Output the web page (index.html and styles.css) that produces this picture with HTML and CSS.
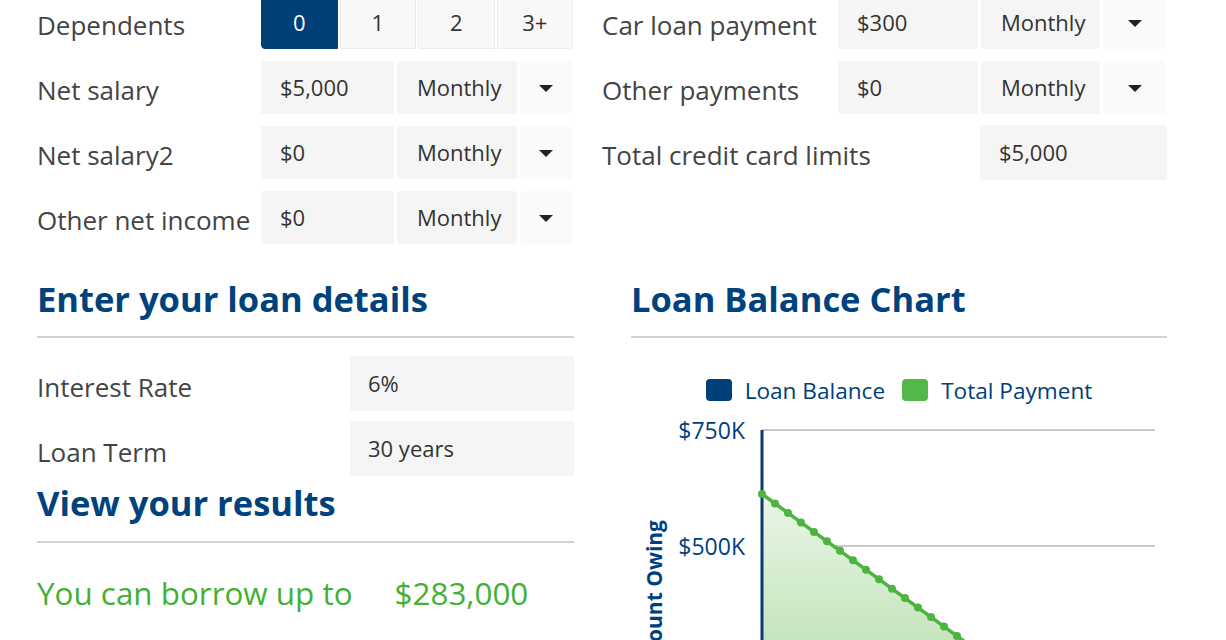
FILE: index.html
```html
<!DOCTYPE html>
<html>
  <head>
    <title>Borrowing power calculator</title>
    <link rel="stylesheet" href="styles.css">
  </head>
  <body>
    <div class="page">
      <div class="income">
        <div class="income-col left">
          <div class="form-row">
            <label class="form-label">Dependents</label>
            <div class="btn-group">
              <button class="btn active">0</button>
              <button class="btn">1</button>
              <button class="btn">2</button>
              <button class="btn">3+</button>
            </div>
          </div>
          <div class="form-row">
            <label class="form-label">Net salary</label>
            <div class="combo">
              <div class="field value">$5,000</div>
              <div class="field period">Monthly</div>
              <div class="field arrow"><span class="caret"></span></div>
            </div>
          </div>
          <div class="form-row">
            <label class="form-label">Net salary2</label>
            <div class="combo">
              <div class="field value">$0</div>
              <div class="field period">Monthly</div>
              <div class="field arrow"><span class="caret"></span></div>
            </div>
          </div>
          <div class="form-row">
            <label class="form-label">Other net income</label>
            <div class="combo">
              <div class="field value">$0</div>
              <div class="field period">Monthly</div>
              <div class="field arrow"><span class="caret"></span></div>
            </div>
          </div>
        </div>

        <div class="income-col right">
          <div class="form-row">
            <label class="form-label">Car loan payment</label>
            <div class="combo">
              <div class="field value">$300</div>
              <div class="field period">Monthly</div>
              <div class="field arrow"><span class="caret"></span></div>
            </div>
          </div>
          <div class="form-row">
            <label class="form-label">Other payments</label>
            <div class="combo">
              <div class="field value">$0</div>
              <div class="field period">Monthly</div>
              <div class="field arrow"><span class="caret"></span></div>
            </div>
          </div>
          <div class="form-row">
            <label class="form-label">Total credit card limits</label>
            <div class="combo end">
              <div class="field value single">$5,000</div>
            </div>
          </div>
        </div>
      </div>

      <div class="lower">
        <div class="loan">
          <h2 class="section-title">Enter your loan details</h2>
          <div class="loan-row">
            <label class="form-label">Interest Rate</label>
            <div class="field wide">6%</div>
          </div>
          <div class="loan-row">
            <label class="form-label">Loan Term</label>
            <div class="field wide">30 years</div>
          </div>
          <h2 class="section-title results">View your results</h2>
          <div class="result">
            <span class="result-label">You can borrow up to</span>
            <span class="result-value">$283,000</span>
          </div>
        </div>

        <div class="chart-box">
          <h2 class="section-title">Loan Balance Chart</h2>
          <div class="legend">
            <span class="swatch blue"></span><span class="legend-text">Loan Balance</span>
            <span class="swatch green"></span><span class="legend-text">Total Payment</span>
          </div>
          <svg class="chart" width="536" height="250" viewBox="0 0 536 250">
            <defs>
              <linearGradient id="areaFill" gradientUnits="userSpaceOnUse" x1="0" y1="79" x2="0" y2="363">
                <stop offset="0%" stop-color="#eaf6e7" />
                <stop offset="100%" stop-color="#a3d597" />
              </linearGradient>
            </defs>
            <g transform="translate(0,10)">
              <!-- grid -->
              <line x1="131" y1="15" x2="524" y2="15" class="grid" />
              <line x1="131" y1="131" x2="524" y2="131" class="grid" />
              <line x1="131" y1="247" x2="524" y2="247" class="grid" />
              <text x="114" y="24" class="tick">$750K</text>
              <text x="114" y="140" class="tick">$500K</text>
              <text x="114" y="256" class="tick">$250K</text>
              <text x="31" y="105" class="axis-title" transform="rotate(-90 31 105)">Amount Owing</text>

              <!-- area + line -->
              <polygon points="131,79 521,363 131,363" fill="url(#areaFill)" />
              <line x1="131" y1="79" x2="521" y2="363" class="series" />
              <line x1="131" y1="15" x2="131" y2="363" class="axis" />
              <g class="dots">
                <circle cx="131" cy="79" r="4" />
                <circle cx="144" cy="88.5" r="4" />
                <circle cx="157" cy="97.9" r="4" />
                <circle cx="170" cy="107.4" r="4" />
                <circle cx="183" cy="116.9" r="4" />
                <circle cx="196" cy="126.3" r="4" />
                <circle cx="209" cy="135.8" r="4" />
                <circle cx="222" cy="145.3" r="4" />
                <circle cx="235" cy="154.7" r="4" />
                <circle cx="248" cy="164.2" r="4" />
                <circle cx="261" cy="173.7" r="4" />
                <circle cx="274" cy="183.1" r="4" />
                <circle cx="287" cy="192.6" r="4" />
                <circle cx="300" cy="202.1" r="4" />
                <circle cx="313" cy="211.5" r="4" />
                <circle cx="326" cy="221" r="4" />
                <circle cx="339" cy="230.5" r="4" />
                <circle cx="352" cy="239.9" r="4" />
                <circle cx="365" cy="249.4" r="4" />
                <circle cx="378" cy="258.9" r="4" />
              </g>
            </g>
          </svg>
        </div>
      </div>
    </div>
  </body>
</html>
```

FILE: styles.css
```css
body {
  margin: 0;
  font-family: "Open Sans", "Liberation Sans", sans-serif;
  color: #444;
  background: #fff;
  overflow: hidden;
}
.page {
  padding-left: 37px;
  width: 1131px;
}

/* top form */
.income {
  display: grid;
  grid-template-columns: 536px 565px;
  column-gap: 29px;
  margin-top: -4px;
}
.income-col {
  display: flex;
  flex-direction: column;
  gap: 12px;
}
.form-row {
  display: flex;
  align-items: stretch;
  height: 53px;
}
.form-label {
  font-size: 26px;
  line-height: 48px;
  padding-top: 5px;
  color: #444;
  white-space: nowrap;
}
.left .form-label {
  width: 224px;
}
.right .form-label {
  width: 236px;
}
.combo {
  flex: 1;
  display: flex;
  gap: 3px;
}
.combo.end {
  justify-content: flex-end;
  height: 55px;
  margin-top: -1px;
}
.field {
  background: #f5f5f5;
  font-size: 22px;
  line-height: 53px;
  color: #333;
  padding-left: 19px;
  border-radius: 3px;
  box-sizing: border-box;
}
.left .value {
  width: 133px;
}
.left .period {
  width: 120px;
}
.left .arrow {
  width: 52px;
}
.right .value {
  width: 140px;
}
.right .period {
  width: 119px;
}
.right .arrow {
  width: 63px;
}
.right .value.single {
  width: 187px;
  line-height: 55px;
}
.period {
  padding-left: 20px;
}
.arrow {
  background: #fafafa;
  padding-left: 0;
  display: flex;
  align-items: center;
  justify-content: center;
}
.caret {
  width: 0;
  height: 0;
  border-left: 7px solid transparent;
  border-right: 7px solid transparent;
  border-top: 7px solid #222;
  margin-top: 2px;
}
.btn-group {
  display: flex;
  gap: 2px;
  width: 312px;
}
.btn {
  flex: 1;
  font-family: inherit;
  font-size: 22px;
  color: #333;
  background: #f8f8f8;
  border: 1px solid #ececec;
  padding: 0 0 2px;
  margin: 0;
}
.btn:last-child {
  border-radius: 0 0 4px 0;
}
.btn.active {
  background: #004079;
  border-color: #004079;
  color: #fff;
  border-radius: 0 0 0 4px;
}

/* lower part */
.lower {
  display: grid;
  grid-template-columns: 537px 536px;
  column-gap: 57px;
  margin-top: 35px;
}
.section-title {
  margin: 0;
  font-size: 34.5px;
  line-height: 40px;
  font-weight: 700;
  color: #00427b;
  padding-bottom: 17px;
  border-bottom: 2px solid #d2d2d2;
}
.section-title.results {
  margin-top: 7px;
  padding-bottom: 18px;
}
.loan-row {
  display: flex;
  height: 55px;
  margin-top: 10px;
}
.loan-row:first-of-type {
  margin-top: 18px;
}
.loan-row .form-label {
  width: 313px;
  line-height: 48px;
  padding-top: 7px;
}
.field.wide {
  flex: 1;
  line-height: 55px;
  padding-left: 18px;
}
.result {
  display: flex;
  gap: 42px;
  margin-top: 30px;
  font-size: 31.4px;
  line-height: 40px;
  color: #43b034;
}

/* chart */
.legend {
  display: flex;
  justify-content: center;
  align-items: center;
  margin-top: 41px;
  height: 22px;
}
.swatch {
  width: 26px;
  height: 22px;
  border-radius: 4px;
  margin-right: 13px;
}
.swatch.blue {
  background: #004079;
}
.swatch.green {
  background: #52b848;
}
.legend-text {
  font-size: 22.6px;
  color: #004079;
  margin-right: 17px;
  line-height: 22px;
  padding-top: 2px;
}
.legend-text:last-child {
  margin-right: 0;
}
.chart {
  display: block;
  margin-top: 4px;
}
.grid {
  stroke: #c9c9c9;
  stroke-width: 2;
}
.tick {
  font-family: "Open Sans", sans-serif;
  font-size: 23px;
  fill: #003f7d;
  text-anchor: end;
}
.axis-title {
  font-family: "Open Sans", sans-serif;
  font-size: 21px;
  font-weight: 700;
  fill: #003f7d;
  text-anchor: end;
}
.series {
  stroke: #4cb43f;
  stroke-width: 3.5;
}
.axis {
  stroke: #0b3b73;
  stroke-width: 3;
}
.dots circle {
  fill: #4cb43f;
}
```
